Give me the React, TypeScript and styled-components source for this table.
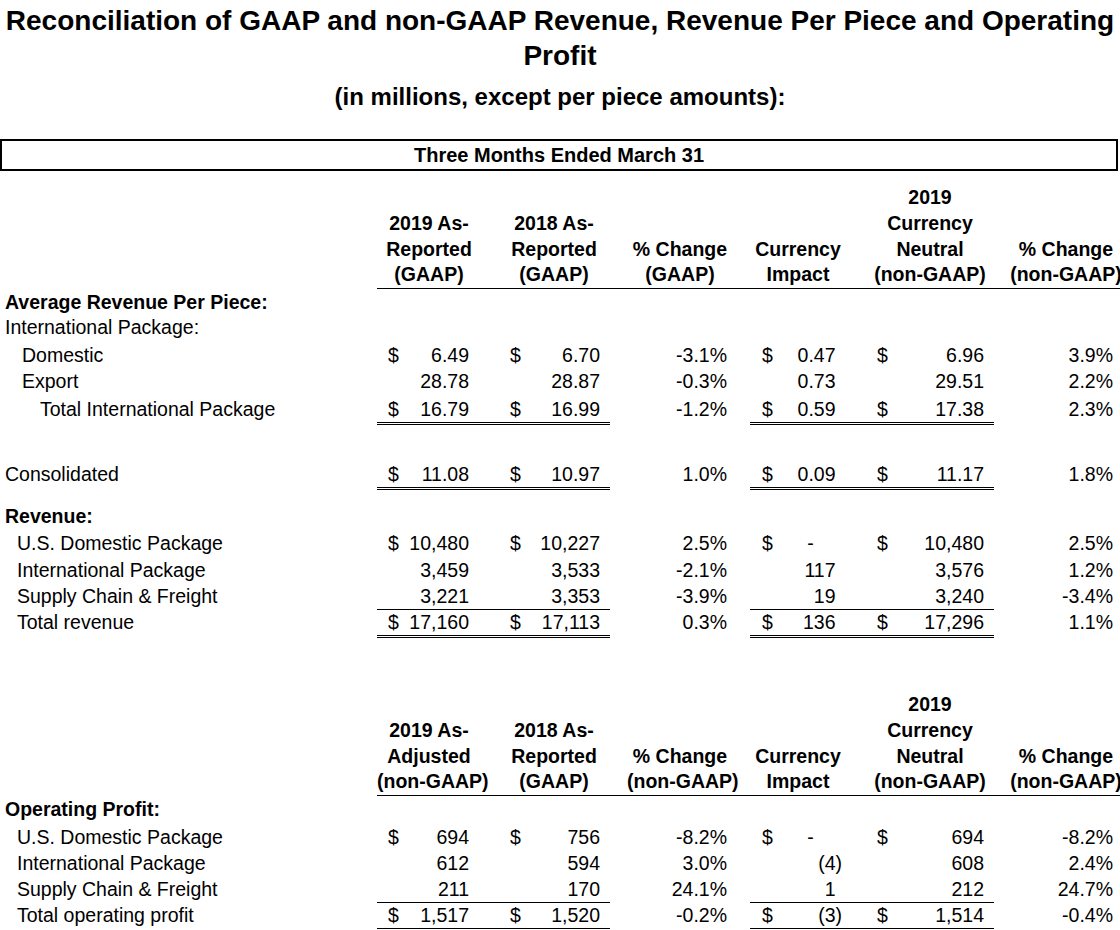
import React from 'react';
import styled, { createGlobalStyle } from 'styled-components';

type Rule = 'none' | 'single' | 'double';

const GlobalStyle = createGlobalStyle`
  html, body { margin: 0; padding: 0; background: #fff; }
  body { overflow: hidden; font-family: "Liberation Sans", Arial, sans-serif; color: #000; }
`;

const Page = styled.div`
  width: 1120px;
  height: 930px;
  overflow: hidden;
`;

const Title = styled.h1`
  margin: 0;
  padding-top: 3px;
  font-size: 28px;
  line-height: 35px;
  font-weight: 700;
  text-align: center;
  white-space: nowrap;
`;

const Subtitle = styled.h2`
  margin: 7px 0 0;
  font-size: 24px;
  line-height: 34px;
  font-weight: 700;
  text-align: center;
`;

const PeriodBox = styled.div`
  box-sizing: border-box;
  width: 1118px;
  height: 32px;
  margin-top: 25px;
  border: 2px solid #000;
  display: flex;
  align-items: center;
  justify-content: center;
  font-size: 20px;
  font-weight: 700;
`;

const HeaderGrid = styled.div<{ $mt: number }>`
  display: grid;
  grid-template-columns: 377px 104px 146px 106px 130px 134px 138px;
  width: 1135px;
  margin-top: ${(p) => p.$mt}px;
  height: 104px;
  align-items: end;
  font-size: 19.5px;
  font-weight: 700;
  line-height: 25.75px;
`;

const HeaderCell = styled.div<{ $ruled: boolean }>`
  text-align: center;
  white-space: nowrap;
  border-bottom: 1px solid ${(p) => (p.$ruled ? '#000' : 'transparent')};
`;

const HeaderLine = styled.span`
  display: block;
`;

const Row = styled.div<{ $h: number }>`
  display: grid;
  grid-template-columns: 377px 122px 111px 140px 105px 139px 126px;
  height: ${(p) => p.$h}px;
  align-items: end;
  font-size: 19.5px;
  line-height: 26px;
`;

const ruleBorder = (rule: Rule, ruled: boolean) => {
  const color = ruled ? '#000' : 'transparent';
  if (rule === 'double') return `3px double ${color}`;
  if (rule === 'single') return `1px solid ${color}`;
  return `0 solid ${color}`;
};

const LabelCell = styled.div<{ $indent: number; $bold?: boolean; $rule: Rule }>`
  padding-left: ${(p) => p.$indent}px;
  font-weight: ${(p) => (p.$bold ? 700 : 400)};
  white-space: nowrap;
  border-bottom: ${(p) => ruleBorder(p.$rule, false)};
`;

const AmountCell = styled.div<{ $padL: number; $padR: number; $rule: Rule; $ruled: boolean }>`
  display: flex;
  justify-content: space-between;
  padding: 0 ${(p) => p.$padR}px 0 ${(p) => p.$padL}px;
  white-space: nowrap;
  border-bottom: ${(p) => ruleBorder(p.$rule, p.$ruled)};
`;

const Dollar = styled.span``;

const Value = styled.span<{ $hang: number }>`
  margin-left: auto;
  padding-right: ${(p) => p.$hang}px;
`;

type Cell = { d?: boolean; v: string };
type DataRow = {
  label?: string;
  indent?: number;
  bold?: boolean;
  h: number;
  rule?: Rule;
  cells?: Cell[];
};

const COLS = [
  { l: 11, r: 30, ruled: true, paren: false },
  { l: 11, r: 10, ruled: true, paren: false },
  { l: 0, r: 23, ruled: false, paren: false },
  { l: 12, r: 13, ruled: true, paren: true },
  { l: 22, r: 10, ruled: true, paren: false },
  { l: 0, r: 7, ruled: false, paren: false },
];

const c = (v: string, d = false): Cell => ({ v, d });

const section1: DataRow[] = [
  { label: 'Average Revenue Per Piece:', indent: 5, bold: true, h: 25 },
  { label: 'International Package:', indent: 5, h: 26 },
  {
    label: 'Domestic', indent: 22, h: 28,
    cells: [c('6.49', true), c('6.70', true), c('-3.1%'), c('0.47', true), c('6.96', true), c('3.9%')],
  },
  {
    label: 'Export', indent: 22, h: 25,
    cells: [c('28.78'), c('28.87'), c('-0.3%'), c('0.73'), c('29.51'), c('2.2%')],
  },
  {
    label: 'Total International Package', indent: 40, h: 32, rule: 'double',
    cells: [c('16.79', true), c('16.99', true), c('-1.2%'), c('0.59', true), c('17.38', true), c('2.3%')],
  },
  { h: 36 },
  {
    label: 'Consolidated', indent: 5, h: 29, rule: 'double',
    cells: [c('11.08', true), c('10.97', true), c('1.0%'), c('0.09', true), c('11.17', true), c('1.8%')],
  },
  { label: 'Revenue:', indent: 5, bold: true, h: 39 },
  {
    label: 'U.S. Domestic Package', indent: 17, h: 27,
    cells: [c('10,480', true), c('10,227', true), c('2.5%'), c('-', true), c('10,480', true), c('2.5%')],
  },
  {
    label: 'International Package', indent: 17, h: 27,
    cells: [c('3,459'), c('3,533'), c('-2.1%'), c('117'), c('3,576'), c('1.2%')],
  },
  {
    label: 'Supply Chain & Freight', indent: 17, h: 26, rule: 'single',
    cells: [c('3,221'), c('3,353'), c('-3.9%'), c('19'), c('3,240'), c('-3.4%')],
  },
  {
    label: 'Total revenue', indent: 17, h: 28, rule: 'double',
    cells: [c('17,160', true), c('17,113', true), c('0.3%'), c('136', true), c('17,296', true), c('1.1%')],
  },
];

const section2: DataRow[] = [
  { label: 'Operating Profit:', indent: 5, bold: true, h: 26 },
  {
    label: 'U.S. Domestic Package', indent: 17, h: 28,
    cells: [c('694', true), c('756', true), c('-8.2%'), c('-', true), c('694', true), c('-8.2%')],
  },
  {
    label: 'International Package', indent: 17, h: 26,
    cells: [c('612'), c('594'), c('3.0%'), c('(4)'), c('608'), c('2.4%')],
  },
  {
    label: 'Supply Chain & Freight', indent: 17, h: 26, rule: 'single',
    cells: [c('211'), c('170'), c('24.1%'), c('1'), c('212'), c('24.7%')],
  },
  {
    label: 'Total operating profit', indent: 17, h: 29, rule: 'double',
    cells: [c('1,517', true), c('1,520', true), c('-0.2%'), c('(3)', true), c('1,514', true), c('-0.4%')],
  },
];

const header1: string[][] = [
  ['2019 As-', 'Reported', '(GAAP)'],
  ['2018 As-', 'Reported', '(GAAP)'],
  ['% Change', '(GAAP)'],
  ['Currency', 'Impact'],
  ['2019', 'Currency', 'Neutral', '(non-GAAP)'],
  ['% Change', '(non-GAAP)'],
];

const header2: string[][] = [
  ['2019 As-', 'Adjusted', '(non-GAAP)'],
  ['2018 As-', 'Reported', '(GAAP)'],
  ['% Change', '(non-GAAP)'],
  ['Currency', 'Impact'],
  ['2019', 'Currency', 'Neutral', '(non-GAAP)'],
  ['% Change', '(non-GAAP)'],
];

const hangFor = (v: string, paren: boolean) => {
  let hang = 0;
  if (v === '-') hang += 21.7;
  if (paren && !v.endsWith(')')) hang += 6.5;
  return hang;
};

const Header: React.FC<{ cols: string[][]; mt: number }> = ({ cols, mt }) => (
  <HeaderGrid $mt={mt}>
    <HeaderCell $ruled={false} />
    {cols.map((lines, i) => (
      <HeaderCell key={i} $ruled>
        {lines.map((l) => (
          <HeaderLine key={l}>{l}</HeaderLine>
        ))}
      </HeaderCell>
    ))}
  </HeaderGrid>
);

const Rows: React.FC<{ rows: DataRow[] }> = ({ rows }) => (
  <>
    {rows.map((r, idx) => {
      const rule = r.rule ?? 'none';
      return (
        <Row key={idx} $h={r.h}>
          <LabelCell $indent={r.indent ?? 0} $bold={r.bold} $rule={rule}>
            {r.label ?? ''}
          </LabelCell>
          {r.cells &&
            r.cells.map((cell, i) => {
              const col = COLS[i];
              return (
                <AmountCell key={i} $padL={col.l} $padR={col.r} $rule={rule} $ruled={col.ruled}>
                  {cell.d && <Dollar>$</Dollar>}
                  <Value $hang={hangFor(cell.v, col.paren)}>{cell.v}</Value>
                </AmountCell>
              );
            })}
        </Row>
      );
    })}
  </>
);

export default function App() {
  return (
    <>
      <GlobalStyle />
      <Page>
        <Title>
          Reconciliation of GAAP and non-GAAP Revenue, Revenue Per Piece and Operating
          <br />
          Profit
        </Title>
        <Subtitle>(in millions, except per piece amounts):</Subtitle>
        <PeriodBox>Three Months Ended March 31</PeriodBox>
        <Header cols={header1} mt={14} />
        <Rows rows={section1} />
        <Header cols={header2} mt={55} />
        <Rows rows={section2} />
      </Page>
    </>
  );
}
